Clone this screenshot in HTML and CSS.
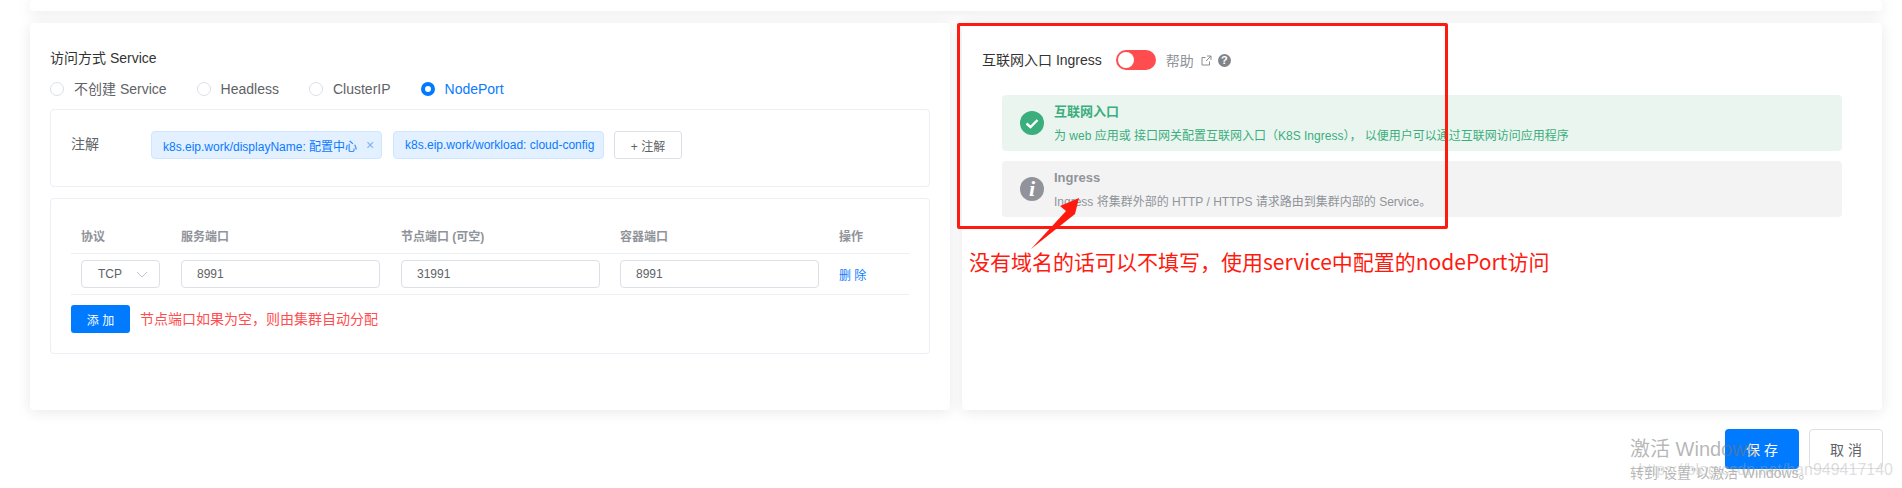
FILE: index.html
```html
<!DOCTYPE html>
<html lang="zh-CN">
<head>
    <meta charset="UTF-8">
    <title>访问方式</title>
    <link rel="stylesheet" href="styles.css">
</head>
<body>

<div class="page">
    <div class="top-card"></div>

    <div class="cards">
        <section class="card">
            <div class="section-title">访问方式 Service</div>
            <div class="radios">
                <label class="radio"><span class="dot"></span>不创建 Service</label>
                <label class="radio"><span class="dot"></span>Headless</label>
                <label class="radio"><span class="dot"></span>ClusterIP</label>
                <label class="radio checked"><span class="dot"></span>NodePort</label>
            </div>

            <div class="box notes">
                <div class="notes-label">注解</div>
                <span class="tag tag-first">k8s.eip.work/displayName: 配置中心<span class="tag-close">×</span></span>
                <span class="tag tag-second">k8s.eip.work/workload: cloud-config</span>
                <button class="btn-note">+ 注解</button>
            </div>

            <div class="box ports">
                <div class="port-row port-head">
                    <div>协议</div>
                    <div>服务端口</div>
                    <div>节点端口 (可空)</div>
                    <div>容器端口</div>
                    <div>操作</div>
                </div>
                <div class="port-row">
                    <div>
                        <div class="select">TCP
                            <svg class="select-arrow" width="12" height="7" viewBox="0 0 12 7"><path d="M1 1l5 5 5-5" fill="none" stroke="#c0c4cc" stroke-width="1"/></svg>
                        </div>
                    </div>
                    <div><input class="input" value="8991"></div>
                    <div><input class="input" value="31991"></div>
                    <div><input class="input" value="8991"></div>
                    <div><a class="link">删 除</a></div>
                </div>
                <div class="port-foot">
                    <button class="btn-add">添 加</button>
                    <span class="hint">节点端口如果为空，则由集群自动分配</span>
                </div>
            </div>
        </section>

        <section class="card">
            <div class="ingress-head">
                <div class="section-title">互联网入口 Ingress</div>
                <span class="switch"></span>
                <span class="help">帮助</span>
                <svg class="ext-icon" width="11" height="11" viewBox="0 0 11 11"><path d="M8.5 6.5v3.5h-7.5v-7.5h3.5M6 1h4v4M10 1L5 6" fill="none" stroke="#8c8c8c" stroke-width="1"/></svg>
                <span class="help-icon">?</span>
            </div>

            <div class="alert alert-green">
                <svg class="alert-icon" width="24" height="24" viewBox="0 0 24 24"><circle cx="12" cy="12" r="12" fill="#3aae7c"/><path d="M6.5 12.5l4 3.5 7-7" fill="none" stroke="#fff" stroke-width="2.4"/></svg>
                <div class="alert-body">
                    <div class="alert-title">互联网入口</div>
                    <div class="alert-text">为 web 应用或 接口网关配置互联网入口（K8S Ingress）， 以便用户可以通过互联网访问应用程序</div>
                </div>
            </div>
            <div class="alert alert-gray">
                <span class="info-icon">i</span>
                <div class="alert-body">
                    <div class="alert-title">Ingress</div>
                    <div class="alert-text">Ingress 将集群外部的 HTTP / HTTPS 请求路由到集群内部的 Service。</div>
                </div>
            </div>
        </section>
    </div>

    <div class="footer">
        <button class="btn-save">保 存</button>
        <button class="btn-cancel">取 消</button>
    </div>
</div>

<!-- 截图上的标注 -->
<div class="mark-rect"></div>
<svg class="mark-arrow" width="70" height="65" viewBox="0 0 70 65"><polygon points="59,8 40,16 46,21 11,59 50,28 55,24" fill="#ff1a10"/></svg>
<div class="mark-text">没有域名的话可以不填写，使用service中配置的nodePort访问</div>

<div class="activate">
    <div class="activate-title">激活 Windows</div>
    <div class="activate-sub">转到"设置"以激活 Windows。</div>
</div>
<div class="watermark">https://blog.csdn.net/han949417140</div>

</body>
</html>
```

FILE: styles.css
```css
* {
    box-sizing: border-box;
}

body {
    margin: 0;
    height: 488px;
    overflow: hidden;
    background-color: #fff;
    font-family: "Liberation Sans", "Noto Sans CJK SC", sans-serif;
    font-size: 14px;
    color: #606266;
}

button {
    font-family: inherit;
    cursor: pointer;
}

.page {
    padding: 0 20px 0 30px;
}

.top-card,
.card {
    background-color: #fff;
    border-radius: 4px;
    box-shadow: 0 2px 14px rgba(40, 40, 70, 0.1);
}

.top-card {
    height: 11px;
}

.cards {
    display: flex;
    gap: 12px;
    margin-top: 12px;
}

.card {
    width: 920px;
    height: 387px;
    padding: 25px 20px 0;
}

.section-title {
    line-height: 20px;
    color: #333;
}

.radios {
    display: flex;
    margin-top: 11px;
    height: 20px;
}

.radio {
    display: flex;
    align-items: center;
    margin-right: 30px;
    line-height: 20px;
}

.radio .dot {
    width: 14px;
    height: 14px;
    margin-right: 10px;
    border: 1px solid #dcdfe6;
    border-radius: 50%;
    background-color: #fff;
}

.radio.checked {
    color: #0a7aff;
}

.radio.checked .dot {
    border: 4px solid #007aff;
}

.box {
    border: 1px solid #ebeef5;
    border-radius: 4px;
    background-color: #fff;
}

.notes {
    display: flex;
    align-items: flex-start;
    height: 78px;
    margin-top: 10px;
    padding: 21px 20px 0;
}

.notes-label {
    width: 80px;
    line-height: 26px;
}

.tag {
    display: flex;
    align-items: center;
    height: 28px;
    padding: 0 11px;
    font-size: 12px;
    white-space: nowrap;
    color: #0a7aff;
    background-color: #e3f0ff;
    border: 1px solid #d0e5ff;
    border-radius: 4px;
}

.tag-first {
    width: 231px;
    margin-right: 11px;
}

.tag-second {
    width: 211px;
    margin-right: 10px;
}

.tag-close {
    margin-left: 9px;
    font-size: 14px;
    color: #7fb2f0;
}

.btn-note {
    width: 68px;
    height: 28px;
    padding: 0;
    font-size: 12px;
    color: #606266;
    background-color: #fff;
    border: 1px solid #dcdfe6;
    border-radius: 3px;
}

.ports {
    height: 156px;
    margin-top: 11px;
    padding: 19px 20px 0;
}

.port-row {
    display: grid;
    grid-template-columns: 100px 220px 219px 219px 80px;
    align-items: center;
    height: 41px;
    border-bottom: 1px solid #ebeef5;
}

.port-row > div {
    padding: 0 10px;
}

.port-head {
    height: 36px;
    font-size: 12px;
    font-weight: bold;
    color: #909399;
}

.select {
    display: flex;
    align-items: center;
    justify-content: space-between;
    width: 79px;
    height: 28px;
    padding: 0 11px 0 16px;
    font-size: 12px;
    border: 1px solid #dcdfe6;
    border-radius: 4px;
}

.input {
    display: block;
    width: 199px;
    height: 28px;
    padding: 0 15px;
    font-family: inherit;
    font-size: 12px;
    color: #606266;
    border: 1px solid #dcdfe6;
    border-radius: 4px;
    outline: none;
}

.link {
    font-size: 12px;
    color: #0a7aff;
}

.port-foot {
    display: flex;
    align-items: center;
    margin-top: 10px;
}

.btn-add {
    width: 59px;
    height: 28px;
    padding: 0;
    margin-right: 10px;
    font-size: 12px;
    color: #fff;
    background-color: #007aff;
    border: none;
    border-radius: 3px;
}

.hint {
    margin-bottom: 2px;
    font-size: 14px;
    color: #ff4d4f;
}

.ingress-head {
    display: flex;
    align-items: center;
    height: 20px;
    margin-top: 2px;
}

.switch {
    position: relative;
    width: 40px;
    height: 20px;
    margin: 0 10px 0 14px;
    border-radius: 10px;
    background-color: #ff4d4f;
}

.switch::after {
    content: "";
    position: absolute;
    top: 2px;
    left: 2px;
    width: 16px;
    height: 16px;
    border-radius: 50%;
    background-color: #fff;
}

.help {
    margin-right: 7px;
    color: #909399;
}

.ext-icon {
    margin-right: 6px;
}

.help-icon {
    width: 13px;
    height: 13px;
    font-size: 11px;
    font-weight: bold;
    line-height: 13px;
    text-align: center;
    color: #fff;
    background-color: #82848a;
    border-radius: 50%;
}

.alert {
    display: flex;
    align-items: center;
    height: 56px;
    margin-left: 20px;
    margin-right: 20px;
    padding-left: 18px;
    border-radius: 4px;
}

.alert-green {
    margin-top: 25px;
    color: #3aae7c;
    background-color: #ebf5f0;
}

.alert-gray {
    margin-top: 10px;
    color: #909399;
    background-color: #f3f3f4;
}

.alert-icon,
.info-icon {
    flex-shrink: 0;
    margin-right: 10px;
}

.info-icon {
    width: 24px;
    height: 24px;
    font-family: "Liberation Serif", serif;
    font-size: 22px;
    font-style: italic;
    font-weight: bold;
    line-height: 24px;
    text-align: center;
    color: #fff;
    background-color: #909399;
    border-radius: 50%;
}

.alert-body {
    padding-top: 2px;
}

.alert-title {
    font-size: 13px;
    font-weight: bold;
    line-height: 18px;
}

.alert-text {
    margin-top: 6px;
    font-size: 12px;
    line-height: 18px;
}

.footer {
    display: flex;
    justify-content: flex-end;
    gap: 10px;
    margin-top: 19px;
    margin-right: -1px;
}

.footer button {
    width: 74px;
    height: 40px;
    padding: 0;
    font-size: 14px;
    border-radius: 4px;
}

.btn-save {
    color: #fff;
    background-color: #007aff;
    border: none;
}

.btn-cancel {
    color: #606266;
    background-color: #fff;
    border: 1px solid #dcdfe6;
}

.mark-rect {
    position: absolute;
    left: 957px;
    top: 23px;
    width: 491px;
    height: 206px;
    border: 3px solid #ff1a10;
    border-radius: 2px;
}

.mark-arrow {
    position: absolute;
    left: 1020px;
    top: 190px;
}

.mark-text {
    position: absolute;
    left: 969px;
    top: 246px;
    font-family: "Noto Sans CJK SC", sans-serif;
    font-size: 21px;
    line-height: 30px;
    white-space: nowrap;
    color: #ff1a10;
}

.activate {
    position: absolute;
    left: 1630px;
    top: 436px;
    color: rgba(120, 120, 120, 0.55);
}

.activate-title {
    font-size: 20px;
    line-height: 26px;
}

.activate-sub {
    margin-top: 1px;
    font-size: 14px;
    line-height: 20px;
}

.watermark {
    position: absolute;
    right: 9px;
    top: 461px;
    font-size: 16px;
    color: rgba(170, 170, 170, 0.4);
    white-space: nowrap;
}
```
